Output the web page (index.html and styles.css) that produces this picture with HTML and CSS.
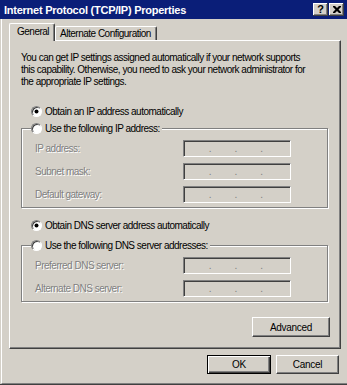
FILE: index.html
```html
<!DOCTYPE html>
<html>
<head>
<meta charset="utf-8">
<link rel="stylesheet" href="styles.css">
</head>
<body>
<div class="window">
  <div class="titlebar">
    <span class="title">Internet Protocol (TCP/IP) Properties</span>
    <div class="tb-buttons">
      <span class="tb-btn help">?</span>
      <span class="tb-btn close"><svg width="8" height="7" viewBox="0 0 8 7"><path d="M0 0h2l2 2 2-2h2v1l-2.5 2.5L8 6v1H6L4 5 2 7H0V6l2.5-2.5L0 1z" fill="#000"/></svg></span>
    </div>
  </div>
  <div class="client">
    <div class="tabs">
      <div class="tab active">General</div>
      <div class="tab">Alternate Configuration</div>
    </div>
    <div class="panel">
      <p class="intro">You can get IP settings assigned automatically if your network supports this capability. Otherwise, you need to ask your network administrator for the appropriate IP settings.</p>
      <div class="radio-row first"><span class="radio checked"></span><span>Obtain an IP address automatically</span></div>
      <fieldset class="group">
        <legend class="radio-row"><span class="radio"></span><span>Use the following IP address:</span></legend>
        <div class="field-row"><span class="lbl">IP address:</span><span class="ipbox"><i></i><b>.</b><i></i><b>.</b><i></i><b>.</b><i></i></span></div>
        <div class="field-row"><span class="lbl">Subnet mask:</span><span class="ipbox"><i></i><b>.</b><i></i><b>.</b><i></i><b>.</b><i></i></span></div>
        <div class="field-row"><span class="lbl">Default gateway:</span><span class="ipbox"><i></i><b>.</b><i></i><b>.</b><i></i><b>.</b><i></i></span></div>
      </fieldset>
      <div class="radio-row second"><span class="radio checked"></span><span>Obtain DNS server address automatically</span></div>
      <fieldset class="group group-dns">
        <legend class="radio-row"><span class="radio"></span><span>Use the following DNS server addresses:</span></legend>
        <div class="field-row"><span class="lbl">Preferred DNS server:</span><span class="ipbox"><i></i><b>.</b><i></i><b>.</b><i></i><b>.</b><i></i></span></div>
        <div class="field-row"><span class="lbl">Alternate DNS server:</span><span class="ipbox"><i></i><b>.</b><i></i><b>.</b><i></i><b>.</b><i></i></span></div>
      </fieldset>
      <div class="adv-row"><button class="btn adv">Advanced</button></div>
    </div>
    <div class="footer">
      <button class="btn ok">OK</button>
      <button class="btn cancel">Cancel</button>
    </div>
  </div>
</div>
</body>
</html>
```

FILE: styles.css
```css
* { box-sizing: border-box; }
html, body { margin: 0; padding: 0; }
body {
  width: 347px;
  height: 385px;
  overflow: hidden;
  background: #d4d0c8;
  font-family: "Liberation Sans", Arial, sans-serif;
  font-size: 10px;
  letter-spacing: -0.5px;
  color: #000;
}
.window {
  width: 347px;
  height: 385px;
  display: flex;
  flex-direction: column;
  background: #d4d0c8;
  border-bottom: 1px solid #404040;
}
.titlebar {
  flex: none;
  height: 19px;
  background: #0a1e78;
  display: flex;
  align-items: center;
  justify-content: space-between;
  padding: 0 3px 0 4px;
}
.title {
  color: #fff;
  font-weight: bold;
  font-size: 11px;
  letter-spacing: -0.25px;
}
.tb-buttons { display: flex; gap: 1px; }
.tb-btn {
  width: 15px;
  height: 13px;
  background: #d4d0c8;
  box-shadow: inset -1px -1px #404040, inset 1px 1px #fff, inset -2px -2px #808080;
  display: flex;
  align-items: center;
  justify-content: center;
  font-weight: bold;
  font-size: 11px;
  letter-spacing: 0;
  line-height: 13px;
  padding-bottom: 1px;
}
.tb-btn svg { display: block; }
.client {
  flex: 1;
  display: flex;
  flex-direction: column;
  margin-left: 1px;
  border-left: 1px solid #fff;
  border-bottom: 1px solid #808080;
  padding: 4px 6px 0 7px;
}
.tabs {
  display: flex;
  align-items: flex-end;
  height: 17px;
  position: relative;
  z-index: 1;
}
.tab {
  height: 14px;
  padding: 0 5px 0 4px;
  border-top: 1px solid #fff;
  border-left: 1px solid #fff;
  border-right: 1px solid #404040;
  border-top-left-radius: 2px;
  border-top-right-radius: 2px;
  box-shadow: inset -1px 0 #808080;
  background: #d4d0c8;
  line-height: 13px;
  white-space: nowrap;
}
.tab.active {
  height: 18px;
  margin-bottom: -1px;
  padding: 0 5px 0 7px;
  line-height: 16px;
}
.panel {
  height: 309px;
  border: 1px solid;
  border-color: #fff #404040 #404040 #fff;
  box-shadow: inset -1px -1px #808080;
  padding: 11px 11px 0 11px;
  display: flex;
  flex-direction: column;
}
.intro {
  margin: 0;
  line-height: 12px;
  width: 292px;
}
.radio-row {
  display: flex;
  align-items: center;
  gap: 3px;
  height: 14px;
  white-space: nowrap;
}
.radio-row.first { margin: 16px 0 0 10px; }
.radio-row.second { margin: 10px 0 0 10px; }
.radio {
  flex: none;
  width: 11px;
  height: 11px;
  border-radius: 50%;
  background: #fff;
  border: 1px solid;
  border-color: #808080 #fff #fff #808080;
  box-shadow: inset 1px 1px #404040;
  display: flex;
  align-items: center;
  justify-content: center;
}
.radio.checked::after {
  content: "";
  width: 3px;
  height: 3px;
  border-radius: 50%;
  background: #000;
  box-shadow: 0 0 0 0.5px #000;
}
.group {
  margin: 3px 0 0 0;
  padding: 0 0 4px 13px;
  border: 1px solid #808080;
  box-shadow: 1px 1px 0 #fff, inset 1px 1px 0 #fff;
  min-width: 0;
  width: 307px;
}
.group-dns { margin-top: 6px; }
.group legend {
  padding: 0 2px 0 0;
  margin-left: -4px;
  background: #d4d0c8;
}
.field-row {
  display: flex;
  align-items: center;
  height: 17px;
  margin-top: 6px;
}
.group legend + .field-row { margin-top: 5px; }
.lbl {
  width: 148px;
  color: #808080;
  text-shadow: 1px 1px 0 #fff;
}
.ipbox {
  width: 108px;
  height: 17px;
  border: 1px solid;
  border-color: #808080 #fff #fff #808080;
  box-shadow: inset 1px 1px #404040;
  background: #d4d0c8;
  display: flex;
  align-items: flex-end;
  padding: 0 4px 2px 1px;
  color: #808080;
  line-height: 10px;
}
.ipbox i { flex: 1; }
.ipbox b { font-weight: normal; width: 2px; }
.adv-row {
  display: flex;
  justify-content: flex-end;
  margin-top: 15px;
}
.btn {
  font-family: "Liberation Sans", Arial, sans-serif;
  font-size: 10px;
  letter-spacing: -0.3px;
  color: #000;
  background: #d4d0c8;
  border: 1px solid;
  border-color: #fff #404040 #404040 #fff;
  box-shadow: inset -1px -1px #808080;
  border-radius: 0;
  padding: 0;
  height: 20px;
  margin: 0;
}
.btn.adv { width: 78px; margin-right: -1px; }
.footer {
  display: flex;
  justify-content: flex-end;
  gap: 5px;
  padding: 6px 2px 0 0;
}
.btn.ok {
  width: 64px;
  height: 19px;
  border: 1px solid #000;
  box-shadow: inset 1px 1px #fff, inset -1px -1px #404040, inset -2px -2px #808080;
}
.btn.cancel { width: 63px; height: 19px; }
```
